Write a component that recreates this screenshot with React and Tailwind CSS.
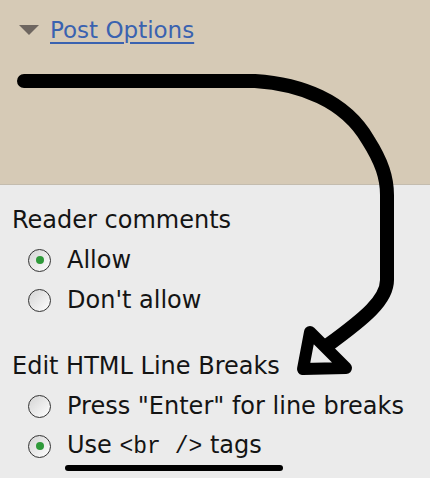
import React from 'react';

function Radio({ checked }) {
  return (
    <span className="relative flex h-[23px] w-[23px] shrink-0 items-center justify-center rounded-full border-[1.5px] border-[#333] bg-gradient-to-br from-[#d4d4d4] to-white">
      {checked && <span className="h-[8px] w-[8px] rounded-full bg-[#2f9a3a]" />}
    </span>
  );
}

function Option({ checked, children }) {
  return (
    <label className="flex h-10 items-center gap-[16px] pl-[28px]">
      <Radio checked={checked} />
      <span>{children}</span>
    </label>
  );
}

export default function App() {
  return (
    <div
      className="relative h-[478px] w-[430px] overflow-hidden bg-[#ebebeb] text-[24px] text-[#141414]"
      style={{ fontFamily: '"DejaVu Sans", sans-serif' }}
    >
      <div className="h-[185px] border-b border-[#c4bcae] bg-[#d6cab6] pt-[14px]">
        <div className="flex h-8 items-center pl-[19px]">
          <span className="h-0 w-0 border-x-[10px] border-t-[10px] border-x-transparent border-t-[#6e6660]" />
          <a href="#" className="ml-[11px] text-[23px] text-[#3a62b0] underline decoration-[1.5px] underline-offset-[4px]">
            Post Options
          </a>
        </div>
      </div>

      <div className="pt-[15px]">
        <div className="flex h-10 items-center pl-3">Reader comments</div>
        <Option checked>Allow</Option>
        <Option>Don't allow</Option>

        <div className="mt-[26px] flex h-10 items-center pl-3">Edit HTML Line Breaks</div>
        <Option>Press "Enter" for line breaks</Option>
        <Option checked>
          Use{' '}
          <span className="text-[23px]" style={{ fontFamily: '"Liberation Mono", monospace' }}>
            &lt;br /&gt;
          </span>{' '}
          tags
        </Option>
      </div>

      {/* hand drawn arrow and underline */}
      <svg className="pointer-events-none absolute inset-0" width="430" height="478" viewBox="0 0 430 478">
        <path
          d="M 24 81 L 255 81 C 300 84 345 100 368 140 C 382 162 387 178 387 195 L 387 280 C 387 300 365 318 328 345"
          fill="none"
          stroke="#000"
          strokeWidth="14"
          strokeLinecap="round"
          strokeLinejoin="round"
        />
        <polygon
          points="310,332 303,369 346,368"
          fill="#ebebeb"
          stroke="#000"
          strokeWidth="12"
          strokeLinejoin="round"
        />
        <line x1="68" y1="468" x2="280" y2="468" stroke="#000" strokeWidth="6" strokeLinecap="round" />
      </svg>
    </div>
  );
}
